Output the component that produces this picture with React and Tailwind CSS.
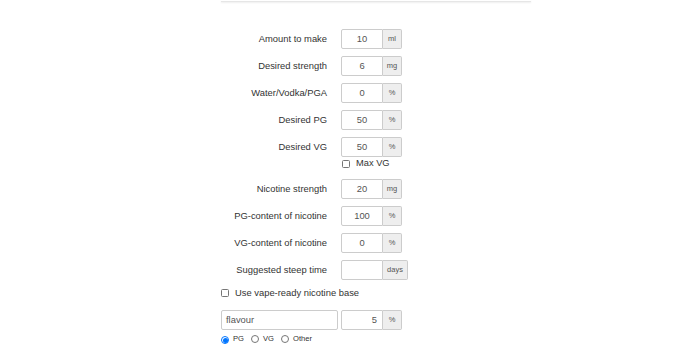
import React from 'react';

const font = { fontFamily: '"Liberation Sans", Arial, sans-serif' };

function Addon({ unit, wide }) {
  return (
    <span className={`flex items-center justify-center h-full bg-[#eeeeee] border border-[#cccccc] border-l-0 rounded-r-[2px] text-[7.5px] text-[#555555] ${wide ? 'w-[25px]' : 'w-[19px]'}`}>
      {unit}
    </span>
  );
}

function Field({ label, value, unit, wide }) {
  return (
    <div className="flex items-center h-[20px]">
      <label className="w-[107px] text-right text-[9.4px] text-[#333333] pr-px">{label}</label>
      <div className="flex h-full ml-[13px]">
        <div className="w-[42px] h-full border border-[#cccccc] rounded-l-[2px] flex items-center justify-center text-[9.4px] text-[#555555] bg-white">
          {value}
        </div>
        <Addon unit={unit} wide={wide} />
      </div>
    </div>
  );
}

function Checkbox() {
  return <span className="inline-block w-[8px] h-[8px] border border-[#767676] rounded-[1.5px] bg-white" />;
}

function Radio({ checked }) {
  return checked ? (
    <span className="inline-flex items-center justify-center w-[8px] h-[8px] rounded-full border border-[#0075ff] bg-white">
      <span className="w-[5px] h-[5px] rounded-full bg-[#0075ff]" />
    </span>
  ) : (
    <span className="inline-block w-[8px] h-[8px] rounded-full border border-[#767676] bg-white" />
  );
}

export default function App() {
  return (
    <div className="w-[692px] h-[358px] bg-white overflow-hidden leading-none" style={font}>
      <div className="pl-[221px]">
        <div className="w-[310px] h-[2px] border-b border-[#e6e6e6] shadow-[0_1px_2px_rgba(0,0,0,0.07)]" />

        <div className="flex flex-col gap-[7px] mt-[27px]">
          <Field label="Amount to make" value="10" unit="ml" />
          <Field label="Desired strength" value="6" unit="mg" />
          <Field label="Water/Vodka/PGA" value="0" unit="%" />
          <Field label="Desired PG" value="50" unit="%" />
          <Field label="Desired VG" value="50" unit="%" />
        </div>
        <div className="flex items-center gap-[6px] ml-[121px] mt-[2px] h-[10px]">
          <Checkbox />
          <span className="text-[9.3px] text-[#333333]">Max VG</span>
        </div>

        <div className="flex flex-col gap-[7px] mt-[10px]">
          <Field label="Nicotine strength" value="20" unit="mg" />
          <Field label="PG-content of nicotine" value="100" unit="%" />
          <Field label="VG-content of nicotine" value="0" unit="%" />
          <Field label="Suggested steep time" value="" unit="days" wide />
        </div>

        <div className="flex items-center gap-[6px] mt-[7px] h-[12px]">
          <Checkbox />
          <span className="text-[9.4px] text-[#333333]">Use vape-ready nicotine base</span>
        </div>

        <div className="flex items-center h-[20px] mt-[11px]">
          <div className="w-[117px] h-full border border-[#cccccc] rounded-[2px] flex items-center pl-[4px] text-[9.4px] text-[#555555]">
            flavour
          </div>
          <div className="flex h-full ml-[3px]">
            <div className="w-[42px] h-full border border-[#cccccc] rounded-l-[2px] flex items-center justify-end pr-[5px] text-[9.4px] text-[#555555]">
              5
            </div>
            <Addon unit="%" />
          </div>
        </div>

        <div className="flex items-center mt-[5px] h-[10px] text-[7.6px] text-[#333333]">
          <Radio checked />
          <span className="ml-[4px] -mt-[2px]">PG</span>
          <span className="ml-[7px]"><Radio /></span>
          <span className="ml-[4px] -mt-[2px]">VG</span>
          <span className="ml-[7px]"><Radio /></span>
          <span className="ml-[4px] -mt-[2px]">Other</span>
        </div>
      </div>
    </div>
  );
}
